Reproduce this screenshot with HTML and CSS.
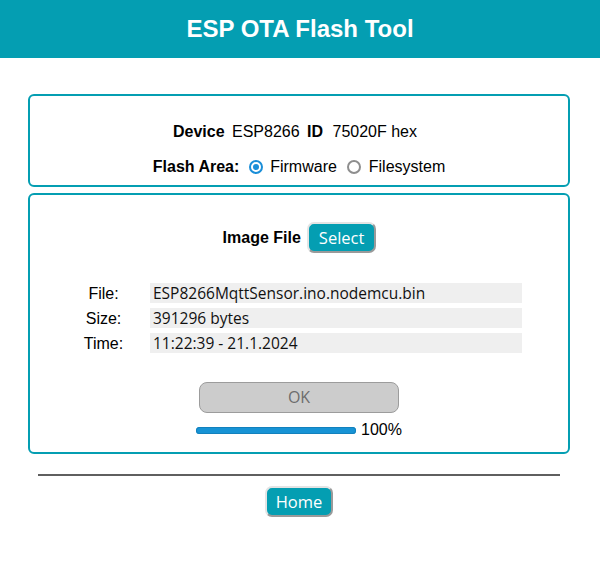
FILE: index.html
```html
<!DOCTYPE html>
<html>
<head>
<meta charset="utf-8">
<title>ESP OTA Flash Tool</title>
<link rel="stylesheet" href="styles.css">
</head>
<body>
<header class="top">ESP OTA Flash Tool</header>
<main class="wrap">
  <section class="card info">
    <div class="line dev"><b>Device</b> ESP8266 <b class="id">ID</b> 75020F hex</div>
    <div class="line">
      <b>Flash Area:</b>
      <label class="opt"><input type="radio" name="area" checked> Firmware</label>
      <label class="opt"><input type="radio" name="area"> Filesystem</label>
    </div>
  </section>
  <section class="card upload">
    <div class="pick"><b>Image File</b> <button class="btn">Select</button></div>
    <div class="meta">
      <span class="lbl">File:</span><span class="val">ESP8266MqttSensor.ino.nodemcu.bin</span>
      <span class="lbl">Size:</span><span class="val">391296 bytes</span>
      <span class="lbl">Time:</span><span class="val">11:22:39 - 21.1.2024</span>
    </div>
    <button class="ok" disabled>OK</button>
    <div class="prog"><span class="bar"></span><span class="pct">100%</span></div>
  </section>
  <hr class="rule">
  <div class="foot"><button class="btn">Home</button></div>
</main>
</body>
</html>
```
FILE: styles.css
```css
html, body { margin: 0; padding: 0; background: #fff; }
body { font-family: "Liberation Sans", Arial, sans-serif; font-size: 16px; color: #000; }
.top {
  height: 58px; line-height: 58px; background: #049eb2; color: #fff;
  text-align: center; font-weight: bold; font-size: 24px;
}
.wrap { margin: 36px 30px 0 28px; display: flex; flex-direction: column; }
.card { border: 2px solid #049eb2; border-radius: 6px; }
.info { padding: 21px 0 3px; display: flex; flex-direction: column; gap: 5px; }
.line { height: 30px; line-height: 30px; text-align: center; }
.dev { padding-right: 11px; }
.dev b { margin: 0 3px; }
.dev .id { margin-right: 5px; }
.opt input {
  appearance: none; -webkit-appearance: none; width: 14px; height: 14px; margin: 0 3px 0 5px;
  border: 2px solid #8e8e8e; border-radius: 50%; vertical-align: -2px; box-sizing: border-box;
  position: relative; background: #fff;
}
.opt input:checked { border-color: #1a8ed8; }
.opt input:checked::after {
  content: ""; position: absolute; left: 2px; top: 2px; width: 6px; height: 6px;
  border-radius: 50%; background: #1a8ed8;
}
.opt + .opt input { margin-left: 6px; }
.upload { margin-top: 6px; padding: 27px 0 12px; display: flex; flex-direction: column; align-items: center; }
.pick { display: flex; align-items: center; gap: 6px; height: 31px; margin-left: 1px; }
.btn {
  font-family: "Open Sans", sans-serif; font-size: 16.5px; color: #fff; background: #049eb2;
  border: 2px solid; border-color: #e4e4e4 #9a9a9a #9a9a9a #e4e4e4; border-radius: 7px;
  height: 31px; padding: 0 10px; line-height: 26px; cursor: pointer;
}
.meta {
  margin-top: 30px; display: grid; grid-template-columns: 55px 372px; column-gap: 19px; row-gap: 5px;
}
.lbl { text-align: center; height: 20px; line-height: 22px; }
.val {
  background: #efefef; height: 20px; line-height: 20px; padding-left: 3px;
  font-family: "Open Sans", sans-serif; font-size: 15.5px; color: #111;
}
.ok {
  margin-top: 29px; width: 200px; height: 31px; background: #cccccc; color: #6d6d6d;
  border: 1px solid #9c9c9c; border-radius: 8px; font-family: "Open Sans", sans-serif; font-size: 16px;
  padding: 0 0 2px;
}
.prog { margin-top: 7px; display: flex; align-items: center; gap: 5px; height: 20px; }
.bar { width: 160px; height: 7px; border-radius: 4px; background: #1793d5; display: block; box-shadow: inset 0 0 0 1px #1381bd; }
.pct { line-height: 20px; }
.rule { margin: 20px 10px 0 10px; border: 0; border-top: 2px solid #5f5f5f; height: 0; }
.foot { margin-top: 10px; display: flex; justify-content: center; }
.foot .btn { padding: 0 9px; }
```
